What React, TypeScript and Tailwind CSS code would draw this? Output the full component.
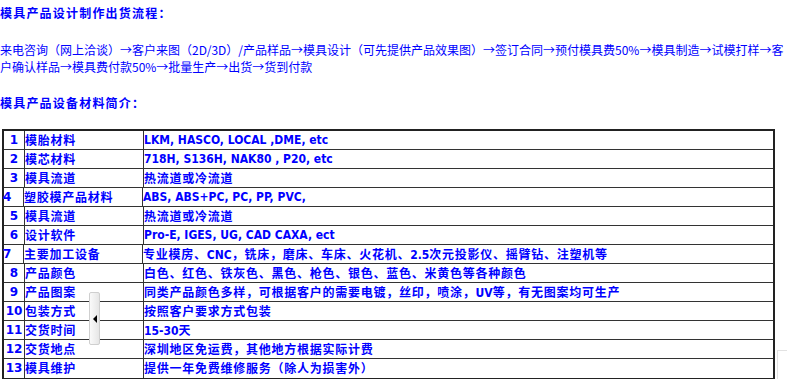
import React from "react";

const rows: [string, string, string][] = [
  ["1", "模胎材料", "LKM, HASCO, LOCAL ,DME, etc"],
  ["2", "模芯材料", "718H, S136H, NAK80 , P20, etc"],
  ["3", "模具流道", "热流道或冷流道"],
  ["4", "塑胶模产品材料", "ABS, ABS+PC, PC, PP, PVC,"],
  ["5", "模具流道", "热流道或冷流道"],
  ["6", "设计软件", "Pro-E, IGES, UG, CAD CAXA, ect"],
  ["7", "主要加工设备", "专业模房、CNC，铣床，磨床、车床、火花机、2.5次元投影仪、摇臂钻、注塑机等"],
  ["8", "产品颜色", "白色、红色、铁灰色、黑色、枪色、银色、蓝色、米黄色等各种颜色"],
  ["9", "产品图案", "同类产品颜色多样，可根据客户的需要电镀，丝印，喷涂，UV等，有无图案均可生产"],
  ["10", "包装方式", "按照客户要求方式包装"],
  ["11", "交货时间", "15-30天"],
  ["12", "交货地点", "深圳地区免运费，其他地方根据实际计费"],
  ["13", "模具维护", "提供一年免费维修服务（除人为损害外）"],
];

const CJK = /[\u3000-\u303f\u4e00-\u9fff\uff00-\uffef]/;

// CJK runs get a little spacing (the original is a bold bitmap font, 13px per char)
function Mixed({ text }: { text: string }) {
  const parts = text.match(/[\u3000-\u303f\u4e00-\u9fff\uff00-\uffef]+|[^\u3000-\u303f\u4e00-\u9fff\uff00-\uffef]+/g) || [];
  return (
    <>
      {parts.map((p, i) =>
        CJK.test(p) ? (
          <span key={i} className="tracking-[0.75px] font-['Noto_Sans_CJK_SC',sans-serif]">{p}</span>
        ) : (
          <span key={i} className="font-['DejaVu_Sans_Condensed','DejaVu_Sans',sans-serif] font-stretch-condensed">{p}</span>
        )
      )}
    </>
  );
}

export default function App() {
  return (
    <div className="relative w-[787px] h-[379px] overflow-hidden bg-white text-[#0000ff] font-['Noto_Sans_CJK_SC',sans-serif]">
      <div className="mt-[4px] text-[12px] leading-[17px] font-bold tracking-[1.2px] whitespace-nowrap">
        模具产品设计制作出货流程：
      </div>

      <div className="mt-[20px] text-[12px] leading-[17px] whitespace-nowrap">
        <div>来电咨询（网上洽谈）→客户来图（2D/3D）/产品样品→模具设计（可先提供产品效果图）→签订合同→预付模具费50%→模具制造→试模打样→客</div>
        <div>户确认样品→模具费付款50%→批量生产→出货→货到付款</div>
      </div>

      <div className="mt-[19px] text-[12px] leading-[17px] font-bold tracking-[1.2px] whitespace-nowrap">
        模具产品设备材料简介：
      </div>

      <div className="ml-[2px] mt-[18px] w-[773px] border-2 border-[#222] font-['DejaVu_Sans','Noto_Sans_CJK_SC',sans-serif] text-[12px] font-bold">
        {rows.map(([n, name, val], i) => (
          <div
            key={n}
            className={`flex h-[19px] ${i < rows.length - 1 ? "border-b border-[#333]" : "h-[18px]"}`}
          >
            <div
              className={`w-[21px] shrink-0 border-r border-[#333] leading-[18px] whitespace-nowrap ${
                n === "4" || n === "7" ? "text-left -ml-[1px]" : "text-center"
              }`}
            >
              {n}
            </div>
            <div className="w-[119px] shrink-0 border-r border-[#333] leading-[18px] whitespace-nowrap">
              <Mixed text={name} />
            </div>
            <div className="flex-1 leading-[18px] whitespace-nowrap overflow-hidden">
              <Mixed text={val} />
            </div>
          </div>
        ))}
      </div>

      {/* collapsed sidebar handle */}
      <div className="absolute left-[89px] top-[292px] w-[11px] h-[53px] rounded-[2px] border border-[#cfcfcf] bg-gradient-to-r from-[#fafafa] to-[#e6e6e6] flex items-center justify-center">
        <div className="w-0 h-0 border-y-[4px] border-y-transparent border-r-[4px] border-r-black" />
      </div>

      {/* faint corner box, bottom right */}
      <div className="absolute left-[777px] top-[350px] w-[20px] h-[40px] border-l border-t border-[#e2e2e2]" />
    </div>
  );
}
